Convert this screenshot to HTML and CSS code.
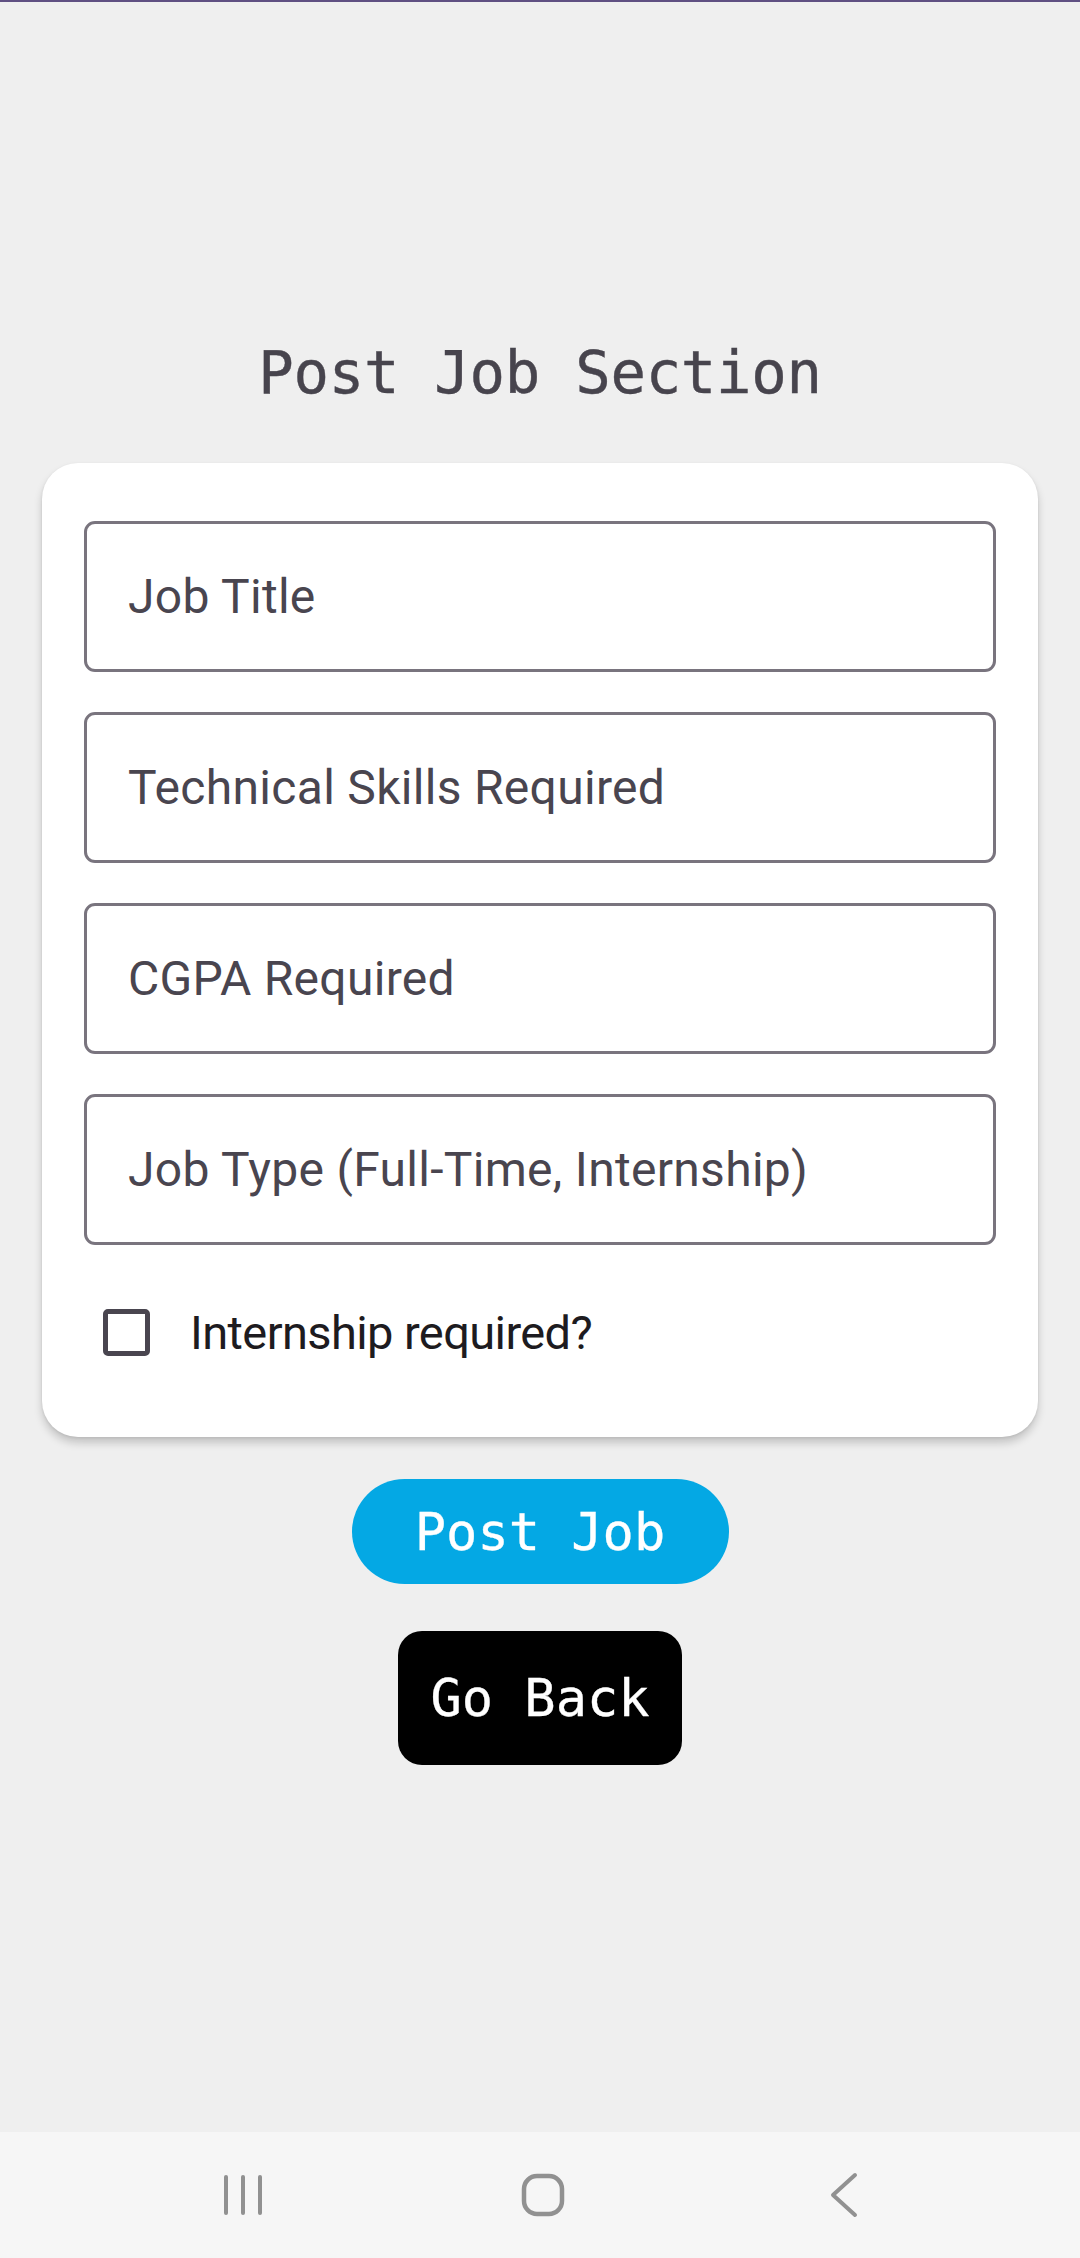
FILE: index.html
```html
<!DOCTYPE html>
<html>
<head>
<meta charset="utf-8">
<link rel="stylesheet" href="styles.css">
</head>
<body>
<div class="screen">
  <div class="topline"></div>
  <main class="main">
    <h1 class="title">Post Job Section</h1>
    <section class="card">
      <div class="field"><span class="label">Job Title</span></div>
      <div class="field"><span class="label">Technical Skills Required</span></div>
      <div class="field"><span class="label">CGPA Required</span></div>
      <div class="field"><span class="label">Job Type (Full-Time, Internship)</span></div>
      <div class="check-row">
        <span class="checkbox"></span>
        <span class="check-label">Internship required?</span>
      </div>
    </section>
    <button class="btn btn-post">Post Job</button>
    <button class="btn btn-back">Go Back</button>
  </main>
  <nav class="navbar">
    <div class="nav-cell">
      <svg width="40" height="42" viewBox="0 0 40 42">
        <line x1="4" y1="3" x2="4" y2="39" />
        <line x1="21" y1="3" x2="21" y2="39" />
        <line x1="38" y1="3" x2="38" y2="39" />
      </svg>
    </div>
    <div class="nav-cell">
      <svg width="44" height="44" viewBox="0 0 44 44">
        <rect x="3" y="3" width="38" height="38" rx="13" ry="13" />
      </svg>
    </div>
    <div class="nav-cell">
      <svg width="30" height="46" viewBox="0 0 30 46">
        <polyline points="26,3 4,23 26,43" />
      </svg>
    </div>
  </nav>
</div>
</body>
</html>
```

FILE: styles.css
```css
* {
  box-sizing: border-box;
}

html, body {
  margin: 0;
  padding: 0;
}

body {
  background: #efefef;
  font-family: Roboto, "Noto Sans", sans-serif;
}

.screen {
  width: 1080px;
  height: 2258px;
  display: flex;
  flex-direction: column;
  background: #efefef;
}

.topline {
  height: 2px;
  background: #5f5082;
  flex: none;
}

.main {
  flex: 1;
  display: flex;
  flex-direction: column;
  align-items: center;
  padding-top: 331px;
}

.title {
  margin: 0;
  height: 80px;
  line-height: 80px;
  font-family: "DejaVu Sans Mono", "Liberation Mono", monospace;
  font-weight: normal;
  font-size: 59px;
  color: #47444d;
  letter-spacing: -0.3px;
  -webkit-text-stroke: 0.4px #47444d;
}

.card {
  margin-top: 50px;
  width: 996px;
  background: #ffffff;
  border-radius: 36px;
  padding: 58px 42px 42px;
  display: flex;
  flex-direction: column;
  gap: 40px;
  box-shadow: 0 6px 8px rgba(0, 0, 0, 0.18), 0 1px 3px rgba(0, 0, 0, 0.08);
}

.field {
  height: 151px;
  border: 3px solid #79747e;
  border-radius: 11px;
  display: flex;
  align-items: center;
  padding-left: 41px;
}

.label {
  font-family: Roboto, sans-serif;
  font-size: 48px;
  color: #49454f;
  letter-spacing: 0.3px;
}

.check-row {
  margin-top: -16px;
  height: 126px;
  display: flex;
  align-items: center;
  padding-left: 19px;
  gap: 40px;
}

.checkbox {
  width: 47px;
  height: 47px;
  border: 5px solid #49454f;
  border-radius: 5px;
  flex: none;
}

.check-label {
  font-family: Roboto, sans-serif;
  font-size: 47px;
  color: #1d1b20;
  letter-spacing: -0.6px;
}

.btn {
  border: none;
  color: #ffffff;
  font-family: "DejaVu Sans Mono", "Liberation Mono", monospace;
  font-size: 52px;
  padding: 0;
  display: flex;
  align-items: center;
  justify-content: center;
  -webkit-text-stroke: 0.3px #ffffff;
}

.btn-post {
  margin-top: 42px;
  width: 377px;
  height: 105px;
  border-radius: 53px;
  background: #04a8e4;
}

.btn-back {
  margin-top: 47px;
  width: 284px;
  height: 134px;
  border-radius: 24px;
  background: #000000;
}

.navbar {
  flex: none;
  height: 126px;
  background: #f6f6f6;
  display: flex;
  justify-content: center;
  align-items: center;
  gap: 181px;
  padding-left: 6px;
}

.nav-cell {
  width: 120px;
  display: flex;
  justify-content: center;
  align-items: center;
}

.nav-cell svg {
  fill: none;
  stroke: #919191;
  stroke-linecap: round;
  stroke-linejoin: round;
}

.nav-cell svg line {
  stroke-width: 4;
}

.nav-cell svg rect {
  stroke-width: 4.5;
}

.nav-cell svg polyline {
  stroke-width: 4;
}
```
